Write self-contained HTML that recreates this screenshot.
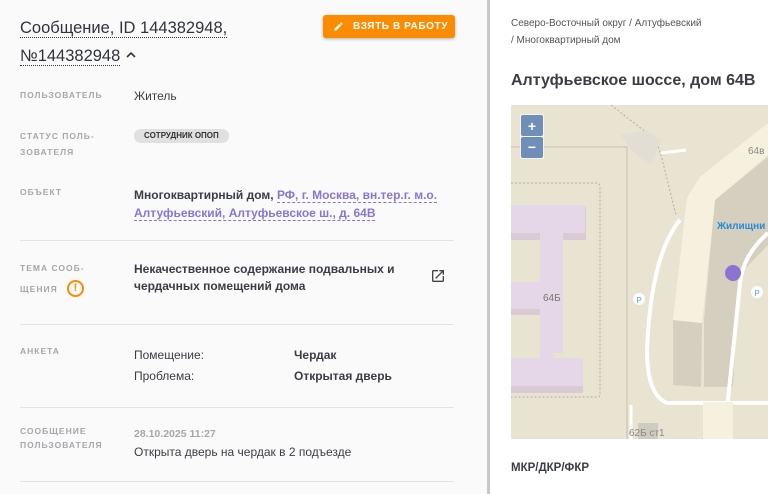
<!DOCTYPE html>
<html><head><meta charset="utf-8"><style>
*{margin:0;padding:0;box-sizing:border-box}
body{width:768px;height:494px;overflow:hidden;background:#fff;font-family:"Liberation Sans",sans-serif;position:relative;color:#3a3d44}
.a{position:absolute;white-space:nowrap}
.lbl{font-size:8.5px;letter-spacing:1px;color:#a5a7ab;font-weight:bold;line-height:18px}
.v{font-size:12px;color:#3a3d44}
.b{font-weight:bold;font-size:12px;color:#3a3d44}
.hr{position:absolute;left:20px;width:434px;height:1px;background:#e3e3e3}
.lnk{color:#8a74d6;border-bottom:1px dashed #8a74d6}
</style></head><body>
<div class="a" style="left:0;top:0;width:487px;height:494px;background:#fafafa"></div>
<div class="a" style="left:487px;top:0;width:3px;height:494px;background:#c8c8c8"></div>
<div class="a" style="left:20px;top:14px;font-size:16.5px;line-height:28px;color:#30333a">
<span style="border-bottom:1px dotted #30333a">Сообщение, ID 144382948,</span><br><span style="border-bottom:1px dotted #30333a">№144382948</span> <svg width="12" height="10" viewBox="0 0 12 10" style="vertical-align:1px"><path d="M2 7L6 3 10 7" fill="none" stroke="#333" stroke-width="1.6"/></svg></div>
<div class="a" style="left:323px;top:15px;width:132px;height:23px;background:#fb8c00;border-radius:3px;box-shadow:0 1px 3px rgba(0,0,0,.3);color:#fff;font-size:10px;font-weight:bold;letter-spacing:.6px;line-height:23px;padding-left:30px">ВЗЯТЬ В РАБОТУ
<svg style="position:absolute;left:10px;top:6px" width="11" height="11" viewBox="0 0 24 24"><path fill="#fff" d="M3 17.25V21h3.75L17.8 9.94l-3.75-3.75zM20.7 7.04a1 1 0 000-1.41l-2.34-2.34a1 1 0 00-1.41 0l-1.83 1.83 3.75 3.75z"/></svg></div>
<div class="a lbl" style="left:20px;top:86px">ПОЛЬЗОВАТЕЛЬ</div>
<div class="a v" style="left:134px;top:89px">Житель</div>
<div class="a lbl" style="left:20px;top:128px;line-height:16px">СТАТУС ПОЛЬ-<br>ЗОВАТЕЛЯ</div>
<div class="a" style="left:134px;top:129px;background:#e0e0e0;border-radius:7px;font-size:8px;font-weight:bold;padding:0 10px;line-height:14px;color:#333">СОТРУДНИК ОПОП</div>
<div class="a lbl" style="left:20px;top:183px">ОБЪЕКТ</div>
<div class="a b" style="left:134px;top:186px;line-height:18px">Многоквартирный дом, <span class="lnk">РФ, г. Москва, вн.тер.г. м.о.</span><br><span class="lnk">Алтуфьевский, Алтуфьевское ш., д. 64В</span></div>
<div class="hr" style="top:240px"></div>
<div class="a lbl" style="left:20px;top:258px;line-height:21px">ТЕМА СООБ-<br>ЩЕНИЯ</div>
<div class="a" style="left:67px;top:280px;width:17px;height:17px;border:2px solid #fb8c00;border-radius:50%;color:#fb8c00;font-size:11px;font-weight:bold;text-align:center;line-height:13px">!</div>
<div class="a b" style="left:134px;top:261px;line-height:17px">Некачественное содержание подвальных и<br>чердачных помещений дома</div>
<svg class="a" style="left:430px;top:268px" width="16" height="16" viewBox="0 0 24 24"><path fill="#444" d="M19 19H5V5h7V3H5a2 2 0 00-2 2v14a2 2 0 002 2h14a2 2 0 002-2v-7h-2zM14 3v2h3.59l-9.83 9.83 1.41 1.41L19 6.41V10h2V3z"/></svg>
<div class="hr" style="top:324px"></div>
<div class="a lbl" style="left:20px;top:342px">АНКЕТА</div>
<div class="a v" style="left:134px;top:345px;line-height:21px">Помещение:<br>Проблема:</div>
<div class="a b" style="left:294px;top:345px;line-height:21px">Чердак<br>Открытая дверь</div>
<div class="hr" style="top:407px"></div>
<div class="a lbl" style="left:20px;top:424px;line-height:14px">СООБЩЕНИЕ<br>ПОЛЬЗОВАТЕЛЯ</div>
<div class="a" style="left:134px;top:428px;font-size:10.5px;color:#a5a7ab;font-weight:bold">28.10.2025 11:27</div>
<div class="a v" style="left:134px;top:445px">Открыта дверь на чердак в 2 подъезде</div>
<div class="hr" style="top:481px"></div>

<div class="a" style="left:511px;top:15px;font-size:10px;line-height:17px;color:#555">Северо-Восточный округ / Алтуфьевский<br>/ Многоквартирный дом</div>
<div class="a" style="left:511px;top:72px;font-size:16px;font-weight:bold;color:#3a3d44">Алтуфьевское шоссе, дом 64В</div>
<svg class="a" style="left:511px;top:105px" width="257" height="334" viewBox="0 0 257 334">
<rect width="257" height="334" fill="#e9e3d2"/>
<path d="M0 42H116V334" fill="none" stroke="#c9c2b2" stroke-width="1"/>
<path d="M0 78H86Q89 78 89 82V290Q89 292 86 292H0" fill="none" stroke="#b8ad9a" stroke-dasharray="2 2"/>
<path d="M100 0L145 35 150 50 165 110" fill="none" stroke="#b8ad9a" stroke-dasharray="2 2"/>
<path d="M110 30L135 25 150 35 140 60 120 45Z" fill="#e2ded3"/>
<path d="M0 102H75V135H0Z" fill="#d9cad6"/><path d="M0 100H74V128H0Z" fill="#e5d7e8"/>
<path d="M29 128H52V248H42V253H29Z" fill="#e5d7e8"/>
<path d="M0 177H29V208H0Z" fill="#e5d7e8"/><path d="M0 204H29V210H0Z" fill="#d9cad6"/>
<path d="M0 253H72V287H0Z" fill="#e5d7e8"/><path d="M0 281H72V288H0Z" fill="#d9cad6"/>
<text x="32" y="196" font-size="10" fill="#777" font-family="Liberation Sans">64Б</text>
<path d="M193 215L204 95 257 52V140L228 170 222 282 193 282Z" fill="#d5cfc0"/>
<path d="M162 215L191 218 190 282 162 280Z" fill="#d5cfc0"/>
<path d="M176 93L189 72 257 18V50L204 95 191 218 162 215Z" fill="#f6f1df"/>
<path d="M150 48L175 45" stroke="#fff" stroke-width="3"/>
<path d="M169 115Q140 150 136 245Q136 290 156 298H257" fill="none" stroke="#fff" stroke-width="4"/>
<path d="M257 128Q232 150 229 178L217 295 216 334" fill="none" stroke="#fff" stroke-width="4"/>
<path d="M120 334V300" stroke="#fff" stroke-width="3"/>
<rect x="192" y="297" width="30" height="37" fill="#f6f1df"/>
<circle cx="222" cy="168" r="8" fill="#8a74d0"/>
<circle cx="128" cy="194" r="6" fill="#fff"/><text x="128" y="198" font-size="8" fill="#5aa3dc" text-anchor="middle" font-family="Liberation Sans">P</text>
<circle cx="246" cy="187" r="6" fill="#fff"/><text x="246" y="191" font-size="8" fill="#5aa3dc" text-anchor="middle" font-family="Liberation Sans">P</text>
<text x="206" y="124" font-size="10" fill="#2a8ad4" font-family="Liberation Sans" font-weight="bold">Жилищни</text>
<text x="237" y="49" font-size="10" fill="#888" font-family="Liberation Sans">64в</text>
<rect x="127" y="318" width="20" height="16" fill="#d0cbc0"/>
<text x="118" y="331" font-size="10" fill="#888" font-family="Liberation Sans">62Б ст1</text>
<rect x="9" y="9" width="24" height="45" fill="#fff" opacity=".6" rx="2"/>
<rect x="10" y="10" width="22" height="21" fill="#6f8fb8" rx="2"/>
<rect x="10" y="32" width="22" height="21" fill="#6f8fb8" rx="2"/>
<text x="21" y="26" font-size="14" fill="#fff" text-anchor="middle" font-weight="bold" font-family="Liberation Sans">+</text>
<text x="21" y="47" font-size="14" fill="#fff" text-anchor="middle" font-weight="bold" font-family="Liberation Sans">−</text>
</svg>
<div class="a" style="left:511px;top:462px;font-size:11.5px;font-weight:bold;color:#3a3d44">МКР/ДКР/ФКР</div>
</body></html>
